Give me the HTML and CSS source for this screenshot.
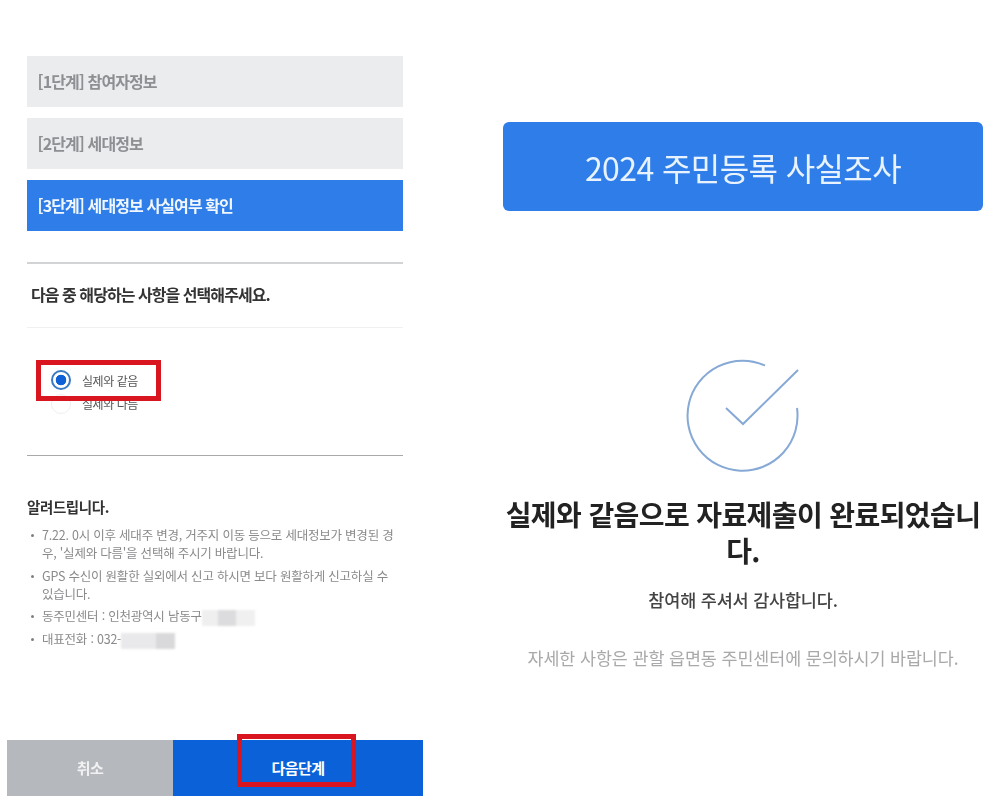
FILE: index.html
```html
<!DOCTYPE html>
<html lang="ko">
<head>
<meta charset="utf-8">
<title>2024 주민등록 사실조사</title>
<link rel="stylesheet" href="styles.css">
</head>
<body>
<main class="page">
  <section class="left">
    <div class="steps">
      <div class="step">[1단계] 참여자정보</div>
      <div class="step">[2단계] 세대정보</div>
      <div class="step step-on">[3단계] 세대정보 사실여부 확인</div>
    </div>
    <h2 class="question">다음 중 해당하는 사항을 선택해주세요.</h2>
    <div class="options">
      <div class="option"><span class="radio radio-on"></span><span>실제와 같음</span></div>
      <div class="option option-b"><span class="radio"></span><span>실제와 다름</span></div>
      <div class="mark mark-a"></div>
    </div>
    <div class="notice">
      <h3>알려드립니다.</h3>
      <ul>
        <li>7.22. 0시 이후 세대주 변경, 거주지 이동 등으로 세대정보가 변경된 경우, '실제와 다름'을 선택해 주시기 바랍니다.</li>
        <li>GPS 수신이 원활한 실외에서 신고 하시면 보다 원활하게 신고하실 수 있습니다.</li>
        <li>동주민센터 : 인천광역시 남동구<span class="mask mask-a"></span></li>
        <li>대표전화 : 032-<span class="mask mask-b"></span></li>
      </ul>
    </div>
    <div class="actions">
      <div class="btn btn-cancel">취소</div>
      <div class="btn btn-next">다음단계<div class="mark mark-b"></div></div>
    </div>
  </section>
  <section class="right">
    <h1 class="banner">2024 주민등록 사실조사</h1>
    <svg class="check" width="114" height="114" viewBox="0 0 114 114" fill="none" stroke="#86a9d6" stroke-width="2">
      <path d="M79 7.5A55 55 0 1 0 111 50"/>
      <path d="M40 50L57 66L112 12"/>
    </svg>
    <p class="done">실제와 같음으로 자료제출이 완료되었습니다.</p>
    <p class="thanks">참여해 주셔서 감사합니다.</p>
    <p class="ask">자세한 사항은 관할 읍면동 주민센터에 문의하시기 바랍니다.</p>
  </section>
</main>
</body>
</html>
```
FILE: styles.css
```css
* { box-sizing: border-box; }
html, body { margin: 0; padding: 0; background: #fff; }
body { font-family: "Noto Sans CJK KR", "Noto Sans", sans-serif; color: #333; }
.page { width: 989px; height: 796px; overflow: hidden; display: flex; filter: blur(0.35px); }

.left { width: 430px; flex: none; padding-top: 56px; display: flex; flex-direction: column; }
.steps { margin: 0 27px 0 27px; width: 376px; display: flex; flex-direction: column; gap: 11px; padding-bottom: 31px; border-bottom: 2px solid #d2d3d5; }
.step { height: 51px; padding: 0 0 1px 10.5px; display: flex; align-items: center; background: #ebecee; color: #8e8f92; font-size: 16px; font-weight: 700; letter-spacing: -0.9px; }
.step-on { background: #2e7de8; color: #f1f7ff; }

.question { margin: 0 27px; width: 376px; height: 64px; padding: 0 0 4px 4px; display: flex; align-items: center; font-size: 16px; font-weight: 700; letter-spacing: -0.95px; color: #333; border-bottom: 1px solid #f0f0f1; }

.options { position: relative; margin: 0 27px; width: 376px; height: 128px; padding-top: 40px; border-bottom: 1px solid #a9a9ab; font-size: 12px; letter-spacing: -0.45px; color: #555; }
.option { display: flex; align-items: center; gap: 11px; height: 24px; padding-left: 24px; }
.option-b { margin-top: -0.5px; }
.radio { width: 20px; height: 20px; border-radius: 50%; border: 1px solid #f0eef0; background: #fff; flex: none; }
.radio-on { border: 2px solid #3a78c4; background: radial-gradient(circle, #0f5fd6 0 5px, #fff 5.6px); }
.mark { position: absolute; border: 5px solid #d9151f; pointer-events: none; }
.mark-a { left: 9px; top: 32px; width: 125px; height: 41px; }

.notice { margin: 0 27px; width: 376px; padding-top: 41px; }
.notice h3 { margin: 0 0 9px; font-size: 14.5px; line-height: 20px; font-weight: 700; letter-spacing: -0.4px; color: #333; }
.notice ul { margin: 0; padding: 0; list-style: none; font-size: 12.5px; line-height: 18px; letter-spacing: -0.22px; color: #8a8a8c; }
.notice li { position: relative; padding: 0 8px 0 15px; margin-bottom: 4.5px; }
.notice li::before { content: ""; position: absolute; left: 4px; top: 8px; width: 3px; height: 3px; border-radius: 50%; background: #808084; }
.mask { display: inline-block; vertical-align: middle; height: 16px; filter: blur(1px); }
.mask-a { width: 53px; background: linear-gradient(90deg, #efeff0 0 30%, #dcdcde 30% 65%, #f0f0f1 65%); }
.mask-b { width: 54px; background: linear-gradient(90deg, #e9e9eb 0 65%, #d9d9db 65%); }

.actions { margin-top: auto; margin-left: 7px; width: 416px; height: 56px; display: flex; }
.btn { display: flex; align-items: center; justify-content: center; padding-bottom: 1px; color: #fff; font-size: 15px; font-weight: 700; letter-spacing: -0.6px; }
.btn-cancel { width: 166px; background: #b5b9be; color: #f1f1f2; }
.btn-next { position: relative; width: 250px; background: #0b62d8; }
.mark-b { left: 64px; top: -6px; width: 119px; height: 53px; }

.right { flex: 1; padding: 122px 6px 0 73px; display: flex; flex-direction: column; align-items: center; }
.banner { margin: 0; width: 480px; height: 89px; flex: none; display: flex; align-items: center; justify-content: center; background: #2e7de8; border-radius: 6px; color: #e9f3ff; font-size: 32px; font-weight: 400; letter-spacing: -0.6px; }
.check { margin: 147px 0 0; flex: none; }
.done { margin: 24px 0 0; width: 480px; text-align: center; word-break: break-all; font-size: 28px; line-height: 36px; font-weight: 700; letter-spacing: -0.6px; color: #222; }
.thanks { margin: 20px 0 0; font-size: 17.5px; line-height: 24px; font-weight: 500; letter-spacing: -0.2px; color: #444; }
.ask { margin: 34px 0 0; font-size: 17.4px; line-height: 24px; letter-spacing: -0.1px; color: #a9a9ab; }
```
